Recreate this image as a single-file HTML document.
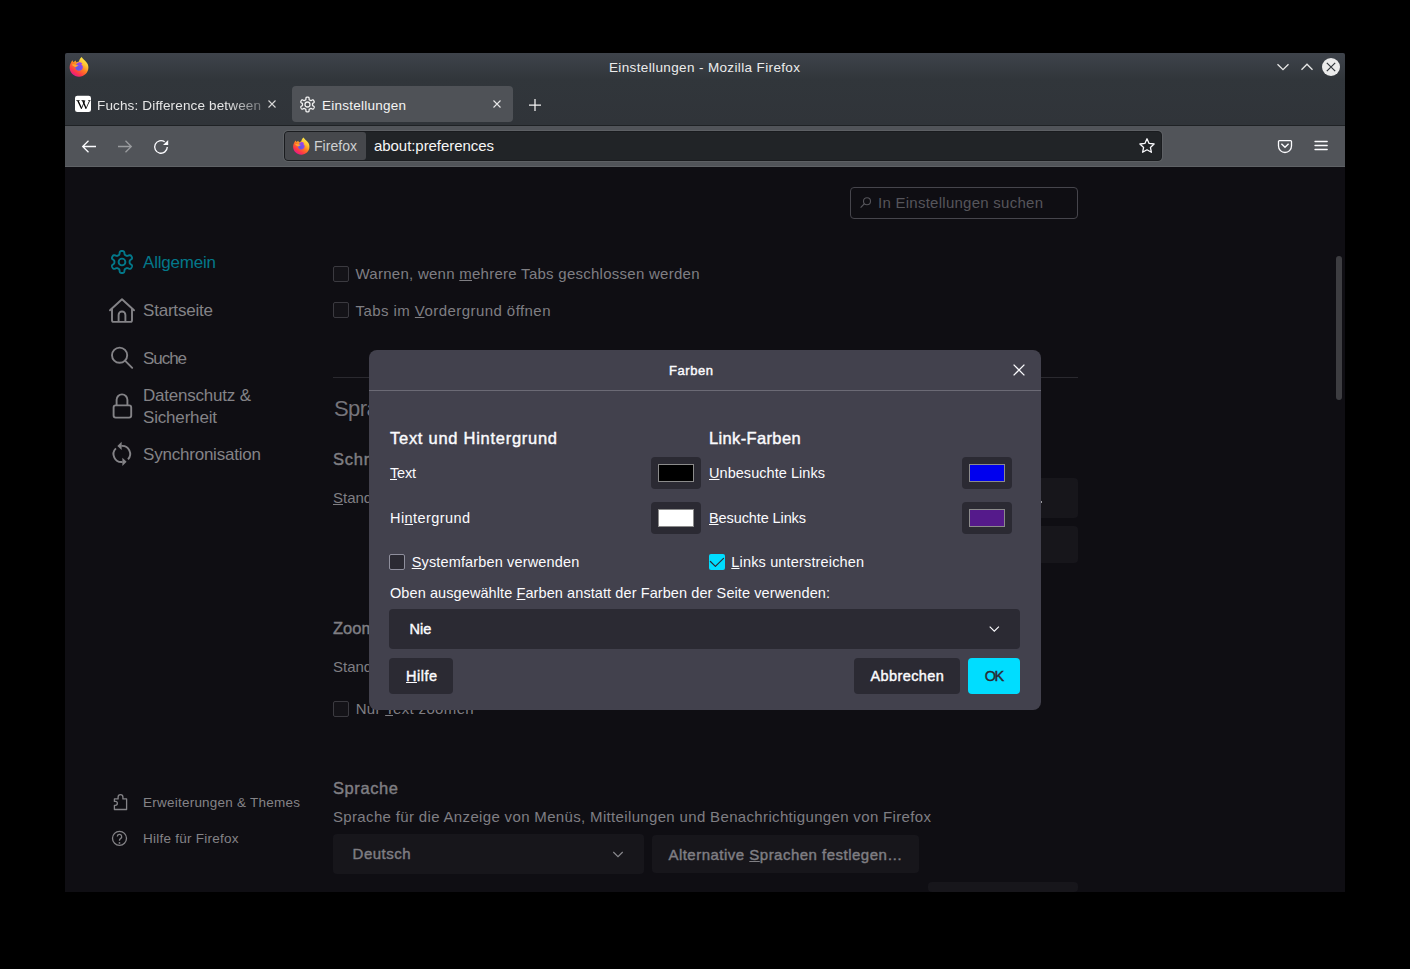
<!DOCTYPE html><html><head><meta charset="utf-8"><style>*{margin:0;padding:0}html,body{width:1410px;height:969px;overflow:hidden;background:#000}
body{position:relative;font-family:"Liberation Sans", sans-serif}u{text-decoration:underline;text-underline-offset:1px;text-decoration-thickness:1px}</style></head><body><div style="position:absolute;left:65px;top:53px;width:1280px;height:839px;background:#0f0e13;overflow:hidden;border-radius:2px 2px 0 0"></div><div style="position:absolute;left:65px;top:53px;width:1280px;height:72px;background:linear-gradient(#3e434b 0,#31363b 26px,#303439 72px);border-radius:2px 2px 0 0"></div><div style="position:absolute;left:65px;top:125px;width:1280px;height:1px;background:#1f2225"></div><div style="position:absolute;left:65px;top:126px;width:1280px;height:41px;background:#515459"></div><div style="position:absolute;left:65px;top:166px;width:1280px;height:1px;background:#5f6266"></div><div style="position:absolute;left:292px;top:86px;width:221px;height:36px;background:#4f5257;border-radius:4px"></div><div style="position:absolute;left:283px;top:130px;width:880px;height:32px;box-sizing:border-box;background:#5d6064;border-radius:5px"></div><div style="position:absolute;left:284px;top:131px;width:878px;height:30px;box-sizing:border-box;background:#212427;border:1px solid #1a1c1f;border-radius:4px"></div><div style="position:absolute;left:285px;top:132px;width:81px;height:28px;background:#46484c;border-radius:3px"></div><div style="position:absolute;left:65px;top:167px;width:1280px;height:725px;background:#0f0e13"></div><div style="position:absolute;left:850px;top:187px;width:228px;height:32px;box-sizing:border-box;border:1px solid #46454c;border-radius:4px;background:#0f0e13"></div><div style="position:absolute;left:333px;top:266px;width:16px;height:16px;box-sizing:border-box;border:1px solid #3b3a40;border-radius:2px;background:#141318"></div><div style="position:absolute;left:333px;top:302px;width:16px;height:16px;box-sizing:border-box;border:1px solid #3b3a40;border-radius:2px;background:#141318"></div><div style="position:absolute;left:333px;top:701px;width:16px;height:16px;box-sizing:border-box;border:1px solid #3b3a40;border-radius:2px;background:#141318"></div><div style="position:absolute;left:333px;top:377px;width:745px;height:1px;background:#2a292f"></div><div style="position:absolute;left:900px;top:478px;width:178px;height:40px;background:#17161b;border-radius:4px"></div><div style="position:absolute;left:900px;top:526px;width:178px;height:37px;background:#17161b;border-radius:4px"></div><div style="position:absolute;left:333px;top:834px;width:311px;height:40px;background:#17161b;border-radius:4px"></div><div style="position:absolute;left:652px;top:835px;width:267px;height:38px;background:#17161b;border-radius:4px"></div><div style="position:absolute;left:928px;top:882px;width:150px;height:10px;background:#17161b;border-radius:4px"></div><div style="position:absolute;left:1336px;top:256px;width:6px;height:144px;background:#3d3d41;border-radius:3px"></div><svg style="position:absolute;left:66px;top:54px" width="26.00" height="26.00" viewBox="0 0 26 26"><defs>
<linearGradient id="fg66" x1="0.85" y1="0.05" x2="0.25" y2="0.95"><stop offset="0" stop-color="#fff44f"/><stop offset="0.3" stop-color="#ffc232"/><stop offset="0.55" stop-color="#ff7a22"/><stop offset="0.8" stop-color="#ff3a45"/><stop offset="1" stop-color="#e8188a"/></linearGradient>
<radialGradient id="fp66" cx="0.35" cy="0.75" r="0.8"><stop offset="0" stop-color="#5b5be0"/><stop offset="1" stop-color="#a040f0"/></radialGradient></defs>
<path d="M15.6 3C17 5.2 19 6.6 20.6 8.4 22 10 22.4 11.8 22.4 13.6 22.4 18.8 18.2 22.7 13 22.7 7.8 22.7 3.6 18.7 3.6 13.6 3.6 10.8 4.8 8.4 6.3 6.3L7.5 8.2 9.4 6.6 10.6 8.6C11.4 8 12.2 7.6 13 7.5 13.2 5.8 14.2 4.2 15.6 3Z" fill="url(#fg66)"/>
<path d="M13 8.2C14.3 8.2 15.6 8.6 16.3 9.6L15.2 10.4C16.4 11.1 16.9 12.1 16.9 13 16.9 15.2 15.1 16.8 13 16.8 10.9 16.8 9.1 15.2 9.1 13.1 9.1 12.8 9.2 12.4 9.3 12.1 10 10.7 11 9.2 13 8.2Z" fill="url(#fp66)"/>
<path d="M6 10.6C7.6 10 9.6 10.4 10.6 10.9L12.6 11.4 9.4 13.3 8.2 12.4C7.2 12.1 6.4 11.6 6 10.6Z" fill="#ffa930"/>
</svg><svg style="position:absolute;left:72px;top:93px;" width="22" height="22" viewBox="0 0 22 22"><rect x="3" y="2.7" width="16" height="16.4" rx="2.4" fill="#fff"/><g fill="#000"><path d="M5.0 7.4H6.6L9.9 14.8 9.1 16Z"/><path d="M8.9 16L12.5 7.4H13.4L9.6 16Z"/><path d="M10.0 7.4H11.5L14.4 14.8 13.6 16Z"/><path d="M13.5 16L17.2 7.4H18.1L14.2 16Z"/><path d="M4.2 7.0H7.8V7.6H4.2Z"/><path d="M9.4 7.0H12.6V7.6H9.4Z"/><path d="M16.0 7.0H18.6V7.6H16.0Z"/></g></svg><svg style="position:absolute;left:267px;top:99px;" width="10" height="10" viewBox="0 0 10 10"><path d="M1.5 1.5L8.5 8.5M8.5 1.5L1.5 8.5" stroke="#d8d8d8" stroke-width="1.1"/></svg><svg style="position:absolute;left:492px;top:99px;" width="10" height="10" viewBox="0 0 10 10"><path d="M1.5 1.5L8.5 8.5M8.5 1.5L1.5 8.5" stroke="#e8e8e8" stroke-width="1.1"/></svg><svg style="position:absolute;left:299.1px;top:95.9px;" width="17" height="17" viewBox="0 0 17 17"><polygon points="13.50,8.50 13.50,8.67 13.49,8.85 13.48,9.02 13.49,9.20 13.53,9.39 13.69,9.60 14.13,9.90 14.75,10.29 15.15,10.66 15.26,10.96 15.24,11.22 15.16,11.46 15.06,11.70 14.94,11.93 14.82,12.15 14.69,12.37 14.55,12.58 14.40,12.78 14.22,12.97 14.01,13.13 13.70,13.18 13.18,13.02 12.53,12.67 12.05,12.44 11.78,12.41 11.60,12.47 11.45,12.55 11.30,12.65 11.15,12.74 11.00,12.83 10.85,12.92 10.69,13.00 10.54,13.08 10.39,13.17 10.25,13.30 10.14,13.55 10.10,14.07 10.07,14.81 9.95,15.34 9.75,15.59 9.51,15.69 9.26,15.75 9.01,15.78 8.75,15.79 8.50,15.80 8.25,15.79 7.99,15.78 7.74,15.75 7.49,15.69 7.25,15.59 7.05,15.34 6.93,14.81 6.90,14.07 6.86,13.55 6.75,13.30 6.61,13.17 6.46,13.08 6.31,13.00 6.15,12.92 6.00,12.83 5.85,12.74 5.70,12.65 5.55,12.55 5.40,12.47 5.22,12.41 4.95,12.44 4.47,12.67 3.82,13.02 3.30,13.18 2.99,13.13 2.78,12.97 2.60,12.78 2.45,12.58 2.31,12.37 2.18,12.15 2.06,11.93 1.94,11.70 1.84,11.46 1.76,11.22 1.74,10.96 1.85,10.66 2.25,10.29 2.87,9.90 3.31,9.60 3.47,9.39 3.51,9.20 3.52,9.02 3.51,8.85 3.50,8.67 3.50,8.50 3.50,8.33 3.51,8.15 3.52,7.98 3.51,7.80 3.47,7.61 3.31,7.40 2.87,7.10 2.25,6.71 1.85,6.34 1.74,6.04 1.76,5.78 1.84,5.54 1.94,5.30 2.06,5.07 2.18,4.85 2.31,4.63 2.45,4.42 2.60,4.22 2.78,4.03 2.99,3.87 3.30,3.82 3.82,3.98 4.47,4.33 4.95,4.56 5.22,4.59 5.40,4.53 5.55,4.45 5.70,4.35 5.85,4.26 6.00,4.17 6.15,4.08 6.31,4.00 6.46,3.92 6.61,3.83 6.75,3.70 6.86,3.45 6.90,2.93 6.93,2.19 7.05,1.66 7.25,1.41 7.49,1.31 7.74,1.25 7.99,1.22 8.25,1.21 8.50,1.20 8.75,1.21 9.01,1.22 9.26,1.25 9.51,1.31 9.75,1.41 9.95,1.66 10.07,2.19 10.10,2.93 10.14,3.45 10.25,3.70 10.39,3.83 10.54,3.92 10.69,4.00 10.85,4.08 11.00,4.17 11.15,4.26 11.30,4.35 11.45,4.45 11.60,4.53 11.78,4.59 12.05,4.56 12.53,4.33 13.18,3.98 13.70,3.82 14.01,3.87 14.22,4.03 14.40,4.22 14.55,4.42 14.69,4.63 14.82,4.85 14.94,5.07 15.06,5.30 15.16,5.54 15.24,5.78 15.26,6.04 15.15,6.34 14.75,6.71 14.13,7.10 13.69,7.40 13.53,7.61 13.49,7.80 13.48,7.98 13.49,8.15 13.50,8.33" fill="none" stroke="#f0f0f0" stroke-width="1.3" stroke-linejoin="round"/><circle cx="8.5" cy="8.5" r="2.50" fill="none" stroke="#f0f0f0" stroke-width="1.3"/></svg><svg style="position:absolute;left:527.5px;top:98px;" width="14" height="14" viewBox="0 0 14 14"><path d="M7 1V13M1 7H13" stroke="#f4f4f4" stroke-width="1.25"/></svg><svg style="position:absolute;left:81px;top:139px;" width="16" height="16" viewBox="0 0 16 16"><path d="M15 7.5H2.2M7.5 1.7L1.7 7.5l5.8 5.8" fill="none" stroke="#fbfbfe" stroke-width="1.3"/></svg><svg style="position:absolute;left:117px;top:139px;" width="16" height="16" viewBox="0 0 16 16"><path d="M1 7.5h12.8M8.5 1.7l5.8 5.8-5.8 5.8" fill="none" stroke="#9a9c9f" stroke-width="1.3"/></svg><svg style="position:absolute;left:148px;top:134px;" width="26" height="26" viewBox="0 0 26 26"><path d="M19.3 13.1A6.3 6.3 0 1 1 16.7 7.8" fill="none" stroke="#fbfbfe" stroke-width="1.35"/><path d="M20.2 5.9V11H15Z" fill="#fbfbfe"/></svg><svg style="position:absolute;left:289.9px;top:135.2px" width="22.54" height="22.54" viewBox="0 0 26 26"><defs>
<linearGradient id="fg289" x1="0.85" y1="0.05" x2="0.25" y2="0.95"><stop offset="0" stop-color="#fff44f"/><stop offset="0.3" stop-color="#ffc232"/><stop offset="0.55" stop-color="#ff7a22"/><stop offset="0.8" stop-color="#ff3a45"/><stop offset="1" stop-color="#e8188a"/></linearGradient>
<radialGradient id="fp289" cx="0.35" cy="0.75" r="0.8"><stop offset="0" stop-color="#5b5be0"/><stop offset="1" stop-color="#a040f0"/></radialGradient></defs>
<path d="M15.6 3C17 5.2 19 6.6 20.6 8.4 22 10 22.4 11.8 22.4 13.6 22.4 18.8 18.2 22.7 13 22.7 7.8 22.7 3.6 18.7 3.6 13.6 3.6 10.8 4.8 8.4 6.3 6.3L7.5 8.2 9.4 6.6 10.6 8.6C11.4 8 12.2 7.6 13 7.5 13.2 5.8 14.2 4.2 15.6 3Z" fill="url(#fg289)"/>
<path d="M13 8.2C14.3 8.2 15.6 8.6 16.3 9.6L15.2 10.4C16.4 11.1 16.9 12.1 16.9 13 16.9 15.2 15.1 16.8 13 16.8 10.9 16.8 9.1 15.2 9.1 13.1 9.1 12.8 9.2 12.4 9.3 12.1 10 10.7 11 9.2 13 8.2Z" fill="url(#fp289)"/>
<path d="M6 10.6C7.6 10 9.6 10.4 10.6 10.9L12.6 11.4 9.4 13.3 8.2 12.4C7.2 12.1 6.4 11.6 6 10.6Z" fill="#ffa930"/>
</svg><svg style="position:absolute;left:1138px;top:137px;" width="18" height="18" viewBox="0 0 18 18"><path d="M9 1.8l2.1 4.6 5 .6-3.7 3.4 1 4.9L9 12.8l-4.4 2.5 1-4.9L1.9 7l5-.6z" fill="none" stroke="#fbfbfe" stroke-width="1.3" stroke-linejoin="round"/></svg><svg style="position:absolute;left:1277px;top:139px;" width="16" height="16" viewBox="0 0 16 16"><path d="M2.4 1.6h11.2a.9.9 0 0 1 .9.9V7a6.5 6.5 0 0 1-13 0V2.5a.9.9 0 0 1 .9-.9z" fill="none" stroke="#fbfbfe" stroke-width="1.3"/><path d="M4.4 4.7l3.6 3.6 3.6-3.6" fill="none" stroke="#fbfbfe" stroke-width="1.4"/></svg><svg style="position:absolute;left:1314px;top:140px;" width="14" height="12" viewBox="0 0 14 12"><path d="M1 1.5H13.2M1 5.5H13.2M1 9.5H13.2" stroke="#fbfbfe" stroke-width="1.3" stroke-linecap="round"/></svg><svg style="position:absolute;left:1276px;top:62px;" width="14" height="10" viewBox="0 0 14 10"><path d="M1.5 2.2l5.5 5.5 5.5-5.5" fill="none" stroke="#e8e8e8" stroke-width="1.3"/></svg><svg style="position:absolute;left:1300px;top:62px;" width="14" height="10" viewBox="0 0 14 10"><path d="M1.5 7.7l5.5-5.5 5.5 5.5" fill="none" stroke="#e8e8e8" stroke-width="1.3"/></svg><svg style="position:absolute;left:1322px;top:58px;" width="18" height="18" viewBox="0 0 18 18"><circle cx="9" cy="9" r="9" fill="#ebebeb"/><path d="M4.8 4.8l8.4 8.4M13.2 4.8l-8.4 8.4" stroke="#31363b" stroke-width="1.2"/></svg><svg style="position:absolute;left:859px;top:196px;" width="13" height="13" viewBox="0 0 13 13"><circle cx="8" cy="5.2" r="3.5" fill="none" stroke="#56555b" stroke-width="1.1"/><path d="M5.5 7.7L1.6 11.6" stroke="#56555b" stroke-width="1.2"/></svg><svg style="position:absolute;left:106px;top:246px;" width="32" height="32" viewBox="0 0 32 32"><polygon points="23.60,16.00 23.60,16.27 23.60,16.53 23.61,16.80 23.66,17.08 23.79,17.37 24.09,17.72 24.64,18.15 25.32,18.67 25.82,19.19 26.05,19.66 26.08,20.07 26.00,20.45 25.87,20.81 25.71,21.16 25.53,21.50 25.32,21.83 25.10,22.14 24.86,22.43 24.56,22.69 24.19,22.87 23.68,22.91 22.97,22.73 22.19,22.41 21.53,22.15 21.08,22.06 20.76,22.09 20.50,22.19 20.26,22.32 20.03,22.45 19.80,22.58 19.57,22.71 19.34,22.85 19.11,22.99 18.90,23.17 18.70,23.43 18.56,23.86 18.45,24.56 18.35,25.41 18.15,26.10 17.86,26.53 17.51,26.76 17.14,26.89 16.77,26.95 16.38,26.99 16.00,27.00 15.62,26.99 15.23,26.95 14.86,26.89 14.49,26.76 14.14,26.53 13.85,26.10 13.65,25.41 13.55,24.56 13.44,23.86 13.30,23.43 13.10,23.17 12.89,22.99 12.66,22.85 12.43,22.71 12.20,22.58 11.97,22.45 11.74,22.32 11.50,22.19 11.24,22.09 10.92,22.06 10.47,22.15 9.81,22.41 9.03,22.73 8.32,22.91 7.81,22.87 7.44,22.69 7.14,22.43 6.90,22.14 6.68,21.83 6.47,21.50 6.29,21.16 6.13,20.81 6.00,20.45 5.92,20.07 5.95,19.66 6.18,19.19 6.68,18.67 7.36,18.15 7.91,17.72 8.21,17.37 8.34,17.08 8.39,16.80 8.40,16.53 8.40,16.27 8.40,16.00 8.40,15.73 8.40,15.47 8.39,15.20 8.34,14.92 8.21,14.63 7.91,14.28 7.36,13.85 6.68,13.33 6.18,12.81 5.95,12.34 5.92,11.93 6.00,11.55 6.13,11.19 6.29,10.84 6.47,10.50 6.68,10.17 6.90,9.86 7.14,9.57 7.44,9.31 7.81,9.13 8.32,9.09 9.03,9.27 9.81,9.59 10.47,9.85 10.92,9.94 11.24,9.91 11.50,9.81 11.74,9.68 11.97,9.55 12.20,9.42 12.43,9.29 12.66,9.15 12.89,9.01 13.10,8.83 13.30,8.57 13.44,8.14 13.55,7.44 13.65,6.59 13.85,5.90 14.14,5.47 14.49,5.24 14.86,5.11 15.23,5.05 15.62,5.01 16.00,5.00 16.38,5.01 16.77,5.05 17.14,5.11 17.51,5.24 17.86,5.47 18.15,5.90 18.35,6.59 18.45,7.44 18.56,8.14 18.70,8.57 18.90,8.83 19.11,9.01 19.34,9.15 19.57,9.29 19.80,9.42 20.03,9.55 20.26,9.68 20.50,9.81 20.76,9.91 21.08,9.94 21.53,9.85 22.19,9.59 22.97,9.27 23.68,9.09 24.19,9.13 24.56,9.31 24.86,9.57 25.10,9.86 25.32,10.17 25.53,10.50 25.71,10.84 25.87,11.19 26.00,11.55 26.08,11.93 26.05,12.34 25.82,12.81 25.32,13.33 24.64,13.85 24.09,14.28 23.79,14.63 23.66,14.92 23.61,15.20 23.60,15.47 23.60,15.73" fill="none" stroke="#03788a" stroke-width="1.9" stroke-linejoin="round"/><circle cx="16.0" cy="16.0" r="3.40" fill="none" stroke="#03788a" stroke-width="1.9"/></svg><svg style="position:absolute;left:106px;top:294px;" width="32" height="32" viewBox="0 0 32 32"><path d="M4 16.3L16 5.2 28 16.3" fill="none" stroke="#848387" stroke-width="1.9" stroke-linejoin="round" stroke-linecap="round"/><path d="M6 14.5V26.3a1.6 1.6 0 0 0 1.6 1.6H24.4a1.6 1.6 0 0 0 1.6-1.6V14.5M12.6 27.9V20.9a3.4 3.4 0 0 1 6.8 0V27.9" fill="none" stroke="#848387" stroke-width="1.9" stroke-linejoin="round"/></svg><svg style="position:absolute;left:106px;top:342px;" width="32" height="32" viewBox="0 0 32 32"><circle cx="13.6" cy="13.2" r="7.6" fill="none" stroke="#848387" stroke-width="1.9"/><path d="M19 18.6l7.2 7.2" stroke="#848387" stroke-width="1.9" stroke-linecap="round"/></svg><svg style="position:absolute;left:106px;top:390px;" width="32" height="32" viewBox="0 0 32 32"><path d="M10.6 15V9.8a5.4 5.4 0 0 1 10.8 0V15" fill="none" stroke="#848387" stroke-width="1.9"/><rect x="7.6" y="15.4" width="17.6" height="12.2" rx="2" fill="none" stroke="#848387" stroke-width="1.9"/></svg><svg style="position:absolute;left:106px;top:438px;" width="32" height="32" viewBox="0 0 32 32"><path d="M15.5 7.9A8 8 0 0 1 22 21.3M9.9 10.4A8 8 0 0 0 16.5 24" fill="none" stroke="#848387" stroke-width="1.9"/><path d="M15.6 3.8L11.4 7.9 15.6 12z" fill="#848387"/><path d="M16.4 19.7L20.6 23.8 16.4 27.9z" fill="#848387"/></svg><svg style="position:absolute;left:108px;top:788px;" width="24" height="30" viewBox="0 0 24 30"><path d="M6.4 10.9H10.1V9a2.4 2.4 0 0 1 4.8 0V10.9H18.6V21.5H6.4V17.3H7.4A1.95 1.95 0 0 0 7.4 13.4H6.4Z" fill="none" stroke="#848387" stroke-width="1.3" stroke-linejoin="round"/></svg><svg style="position:absolute;left:111px;top:830px;" width="17" height="17" viewBox="0 0 17 17"><circle cx="8.5" cy="8.3" r="7.0" fill="none" stroke="#848387" stroke-width="1.3"/><path d="M6.3 6.6a2.2 2.2 0 1 1 3.2 2c-.7.4-1 .8-1 1.6v.6" fill="none" stroke="#848387" stroke-width="1.3"/><circle cx="8.5" cy="12.9" r=".9" fill="#848387"/></svg><svg style="position:absolute;left:611px;top:849px;" width="13" height="10" viewBox="0 0 13 10"><path d="M2.3 3l4.7 4.7 4.7-4.7" fill="none" stroke="#8a898e" stroke-width="1.15"/></svg><div id="title" style="position:absolute;left:609px;top:61.00px;font-size:13.5px;font-weight:400;line-height:1;color:#ececec;white-space:pre;letter-spacing:0.364px;">Einstellungen - Mozilla Firefox<span style="display:inline-block;width:0;height:0"></span></div><div id="tab1" style="position:absolute;left:97px;top:99.00px;font-size:13.5px;font-weight:400;line-height:1;color:#e6e6e6;white-space:pre;letter-spacing:0.152px;width:170px;overflow:hidden;-webkit-mask-image:linear-gradient(90deg,#000 0,#000 130px,rgba(0,0,0,.35) 164px);">Fuchs: Difference between<span style="display:inline-block;width:0;height:0"></span></div><div id="tab2" style="position:absolute;left:322px;top:99.00px;font-size:13.5px;font-weight:400;line-height:1;color:#f4f4f4;white-space:pre;letter-spacing:0.245px;">Einstellungen<span style="display:inline-block;width:0;height:0"></span></div><div id="idbox" style="position:absolute;left:314px;top:139.00px;font-size:14px;font-weight:400;line-height:1;color:#cfd0d2;white-space:pre;letter-spacing:0.034px;">Firefox<span style="display:inline-block;width:0;height:0"></span></div><div id="url" style="position:absolute;left:374px;top:138.00px;font-size:15px;font-weight:400;line-height:1;color:#f6f6f6;white-space:pre;letter-spacing:-0.058px;">about:preferences<span style="display:inline-block;width:0;height:0"></span></div><div id="search" style="position:absolute;left:878px;top:195.00px;font-size:15px;font-weight:400;line-height:1;color:#56555b;white-space:pre;letter-spacing:0.260px;">In Einstellungen suchen<span style="display:inline-block;width:0;height:0"></span></div><div id="cat1" style="position:absolute;left:143px;top:254.00px;font-size:17px;font-weight:400;line-height:1;color:#03788a;white-space:pre;letter-spacing:-0.207px;">Allgemein<span style="display:inline-block;width:0;height:0"></span></div><div id="cat2" style="position:absolute;left:143px;top:302.00px;font-size:17px;font-weight:400;line-height:1;color:#848387;white-space:pre;letter-spacing:-0.201px;">Startseite<span style="display:inline-block;width:0;height:0"></span></div><div id="cat3" style="position:absolute;left:143px;top:350.00px;font-size:17px;font-weight:400;line-height:1;color:#848387;white-space:pre;letter-spacing:-1.051px;">Suche<span style="display:inline-block;width:0;height:0"></span></div><div id="cat4" style="position:absolute;left:143px;top:387.00px;font-size:17px;font-weight:400;line-height:1;color:#848387;white-space:pre;letter-spacing:-0.214px;">Datenschutz &amp;<span style="display:inline-block;width:0;height:0"></span></div><div id="cat4b" style="position:absolute;left:143px;top:409.00px;font-size:17px;font-weight:400;line-height:1;color:#848387;white-space:pre;letter-spacing:-0.179px;">Sicherheit<span style="display:inline-block;width:0;height:0"></span></div><div id="cat5" style="position:absolute;left:143px;top:446.00px;font-size:17px;font-weight:400;line-height:1;color:#848387;white-space:pre;letter-spacing:-0.212px;">Synchronisation<span style="display:inline-block;width:0;height:0"></span></div><div id="ext" style="position:absolute;left:143px;top:796.00px;font-size:13.5px;font-weight:400;line-height:1;color:#848387;white-space:pre;letter-spacing:0.234px;">Erweiterungen &amp; Themes<span style="display:inline-block;width:0;height:0"></span></div><div id="help" style="position:absolute;left:143px;top:832.00px;font-size:13.5px;font-weight:400;line-height:1;color:#848387;white-space:pre;letter-spacing:0.248px;">Hilfe für Firefox<span style="display:inline-block;width:0;height:0"></span></div><div id="warn" style="position:absolute;left:355.5px;top:266.00px;font-size:15px;font-weight:400;line-height:1;color:#7f7e83;white-space:pre;letter-spacing:0.263px;">Warnen, wenn <u>m</u>ehrere Tabs geschlossen werden<span style="display:inline-block;width:0;height:0"></span></div><div id="tabsfg" style="position:absolute;left:355.5px;top:303.00px;font-size:15px;font-weight:400;line-height:1;color:#7f7e83;white-space:pre;letter-spacing:0.439px;">Tabs im <u>V</u>ordergrund öffnen<span style="display:inline-block;width:0;height:0"></span></div><div id="h_lang" style="position:absolute;left:334px;top:398.00px;font-size:22px;font-weight:300;line-height:1;color:#75747a;white-space:pre;letter-spacing:0.000px;letter-spacing:-0.6px;">Sprache und Erscheinungsbild<span style="display:inline-block;width:0;height:0"></span></div><div id="h_fonts" style="position:absolute;left:333px;top:451.00px;font-size:16.5px;font-weight:400;line-height:1;color:#7f7e83;white-space:pre;letter-spacing:0.000px;-webkit-text-stroke:0.42px #7f7e83;letter-spacing:0.8px;">Schriftarten<span style="display:inline-block;width:0;height:0"></span></div><div id="stdfont" style="position:absolute;left:333px;top:490.00px;font-size:15px;font-weight:400;line-height:1;color:#7f7e83;white-space:pre;letter-spacing:0.000px;"><u>S</u>tandard-Schriftart<span style="display:inline-block;width:0;height:0"></span></div><div id="h_zoom" style="position:absolute;left:333px;top:620.00px;font-size:16.5px;font-weight:400;line-height:1;color:#7f7e83;white-space:pre;letter-spacing:0.000px;-webkit-text-stroke:0.42px #7f7e83;">Zoom<span style="display:inline-block;width:0;height:0"></span></div><div id="stdzoom" style="position:absolute;left:333px;top:659.00px;font-size:15px;font-weight:400;line-height:1;color:#7f7e83;white-space:pre;letter-spacing:0.000px;">Standard-Zoom<span style="display:inline-block;width:0;height:0"></span></div><div id="onlytext" style="position:absolute;left:355.7px;top:701.00px;font-size:15px;font-weight:400;line-height:1;color:#7f7e83;white-space:pre;letter-spacing:0.348px;">Nur <u>T</u>ext zoomen<span style="display:inline-block;width:0;height:0"></span></div><div id="h_sprache" style="position:absolute;left:333px;top:780.00px;font-size:16.5px;font-weight:400;line-height:1;color:#7f7e83;white-space:pre;letter-spacing:0.589px;-webkit-text-stroke:0.42px #7f7e83;">Sprache<span style="display:inline-block;width:0;height:0"></span></div><div id="langdesc" style="position:absolute;left:333px;top:809.00px;font-size:15px;font-weight:400;line-height:1;color:#7f7e83;white-space:pre;letter-spacing:0.341px;">Sprache für die Anzeige von Menüs, Mitteilungen und Benachrichtigungen von Firefox<span style="display:inline-block;width:0;height:0"></span></div><div id="deutsch" style="position:absolute;left:352.6px;top:846.00px;font-size:15px;font-weight:400;line-height:1;color:#7f7e83;white-space:pre;letter-spacing:0.495px;-webkit-text-stroke:0.42px #7f7e83;">Deutsch<span style="display:inline-block;width:0;height:0"></span></div><div id="altlang" style="position:absolute;left:668.4px;top:847.00px;font-size:15px;font-weight:400;line-height:1;color:#7f7e83;white-space:pre;letter-spacing:0.489px;-webkit-text-stroke:0.42px #7f7e83;">Alternative <u>S</u>prachen festlegen…<span style="display:inline-block;width:0;height:0"></span></div><div style="position:absolute;left:369px;top:350px;width:672px;height:360px;background:#42414d;border-radius:8px"></div><div style="position:absolute;left:369px;top:390px;width:672px;height:1px;background:#6b6a75"></div><div style="position:absolute;left:651px;top:457px;width:50px;height:32px;background:#2b2a33;border-radius:4px"></div><div style="position:absolute;left:658px;top:464px;width:36px;height:18px;box-sizing:border-box;border:1px solid #8b8b8b;background:#000000"></div><div style="position:absolute;left:651px;top:502px;width:50px;height:32px;background:#2b2a33;border-radius:4px"></div><div style="position:absolute;left:658px;top:509px;width:36px;height:18px;box-sizing:border-box;border:1px solid #8b8b8b;background:#ffffff"></div><div style="position:absolute;left:962px;top:457px;width:50px;height:32px;background:#2b2a33;border-radius:4px"></div><div style="position:absolute;left:969px;top:464px;width:36px;height:18px;box-sizing:border-box;border:1px solid #8b8b8b;background:#0000ee"></div><div style="position:absolute;left:962px;top:502px;width:50px;height:32px;background:#2b2a33;border-radius:4px"></div><div style="position:absolute;left:969px;top:509px;width:36px;height:18px;box-sizing:border-box;border:1px solid #8b8b8b;background:#551a8b"></div><div style="position:absolute;left:389px;top:554px;width:16px;height:16px;box-sizing:border-box;border:1px solid #8f8f9d;border-radius:2px;background:#2b2a33"></div><div style="position:absolute;left:709px;top:554px;width:16px;height:16px;background:#00ddff;border-radius:2px"></div><svg style="position:absolute;left:709px;top:554px;" width="16" height="16" viewBox="0 0 16 16"><path d="M1.4 7.5l5 4.9 8.1-8" fill="none" stroke="#2b2a33" stroke-width="1.2" stroke-linecap="round" stroke-linejoin="round"/></svg><div style="position:absolute;left:389px;top:609px;width:631px;height:40px;background:#2b2a33;border-radius:4px"></div><svg style="position:absolute;left:988px;top:624px;" width="12" height="10" viewBox="0 0 12 10"><path d="M1.7 2.6l4.6 4.6 4.6-4.6" fill="none" stroke="#fbfbfe" stroke-width="1.15"/></svg><div style="position:absolute;left:389px;top:658px;width:64px;height:36px;background:#2b2a33;border-radius:4px"></div><div style="position:absolute;left:854px;top:658px;width:106px;height:36px;background:#2b2a33;border-radius:4px"></div><div style="position:absolute;left:968px;top:658px;width:52px;height:36px;background:#00ddff;border-radius:4px"></div><div style="position:absolute;left:1041px;top:501px;width:1px;height:2px;background:#9a9a9e"></div><svg style="position:absolute;left:1011px;top:362px;" width="16" height="16" viewBox="0 0 16 16"><path d="M2.6 2.6L13.4 13.4M13.4 2.6L2.6 13.4" stroke="#fbfbfe" stroke-width="1.3"/></svg><div id="d_title" style="position:absolute;left:669px;top:364.00px;font-size:13px;font-weight:400;line-height:1;color:#fbfbfe;white-space:pre;letter-spacing:0.559px;-webkit-text-stroke:0.42px #fbfbfe;">Farben<span style="display:inline-block;width:0;height:0"></span></div><div id="d_h1" style="position:absolute;left:390px;top:430.00px;font-size:16.5px;font-weight:400;line-height:1;color:#fbfbfe;white-space:pre;letter-spacing:0.727px;-webkit-text-stroke:0.42px #fbfbfe;">Text und Hintergrund<span style="display:inline-block;width:0;height:0"></span></div><div id="d_h2" style="position:absolute;left:709px;top:430.00px;font-size:16.5px;font-weight:400;line-height:1;color:#fbfbfe;white-space:pre;letter-spacing:0.355px;-webkit-text-stroke:0.42px #fbfbfe;">Link-Farben<span style="display:inline-block;width:0;height:0"></span></div><div id="d_text" style="position:absolute;left:390px;top:466.00px;font-size:14.5px;font-weight:400;line-height:1;color:#fbfbfe;white-space:pre;letter-spacing:-0.198px;"><u>T</u>ext<span style="display:inline-block;width:0;height:0"></span></div><div id="d_bg" style="position:absolute;left:390px;top:511.00px;font-size:14.5px;font-weight:400;line-height:1;color:#fbfbfe;white-space:pre;letter-spacing:0.420px;">Hi<u>n</u>tergrund<span style="display:inline-block;width:0;height:0"></span></div><div id="d_unv" style="position:absolute;left:709px;top:466.00px;font-size:14.5px;font-weight:400;line-height:1;color:#fbfbfe;white-space:pre;letter-spacing:0.048px;"><u>U</u>nbesuchte Links<span style="display:inline-block;width:0;height:0"></span></div><div id="d_vis" style="position:absolute;left:709px;top:511.00px;font-size:14.5px;font-weight:400;line-height:1;color:#fbfbfe;white-space:pre;letter-spacing:-0.103px;"><u>B</u>esuchte Links<span style="display:inline-block;width:0;height:0"></span></div><div id="d_sys" style="position:absolute;left:411.7px;top:555.00px;font-size:14.5px;font-weight:400;line-height:1;color:#fbfbfe;white-space:pre;letter-spacing:0.147px;"><u>S</u>ystemfarben verwenden<span style="display:inline-block;width:0;height:0"></span></div><div id="d_ul" style="position:absolute;left:731.3px;top:555.00px;font-size:14.5px;font-weight:400;line-height:1;color:#fbfbfe;white-space:pre;letter-spacing:0.159px;"><u>L</u>inks unterstreichen<span style="display:inline-block;width:0;height:0"></span></div><div id="d_over" style="position:absolute;left:390px;top:586.00px;font-size:14.5px;font-weight:400;line-height:1;color:#fbfbfe;white-space:pre;letter-spacing:0.089px;">Oben ausgewählte <u>F</u>arben anstatt der Farben der Seite verwenden:<span style="display:inline-block;width:0;height:0"></span></div><div id="d_nie" style="position:absolute;left:409.4px;top:622.00px;font-size:14.5px;font-weight:400;line-height:1;color:#fbfbfe;white-space:pre;letter-spacing:0.117px;-webkit-text-stroke:0.42px #fbfbfe;">Nie<span style="display:inline-block;width:0;height:0"></span></div><div id="d_hilfe" style="position:absolute;left:406px;top:669.00px;font-size:14.5px;font-weight:400;line-height:1;color:#fbfbfe;white-space:pre;letter-spacing:0.492px;-webkit-text-stroke:0.42px #fbfbfe;"><u>H</u>ilfe<span style="display:inline-block;width:0;height:0"></span></div><div id="d_cancel" style="position:absolute;left:870.5px;top:669.00px;font-size:14.5px;font-weight:400;line-height:1;color:#fbfbfe;white-space:pre;letter-spacing:0.395px;-webkit-text-stroke:0.42px #fbfbfe;">Abbrechen<span style="display:inline-block;width:0;height:0"></span></div><div id="d_ok" style="position:absolute;left:984.7px;top:669.00px;font-size:14.5px;font-weight:400;line-height:1;color:#2b2a33;white-space:pre;letter-spacing:-1.553px;-webkit-text-stroke:0.42px #2b2a33;">OK<span style="display:inline-block;width:0;height:0"></span></div></body></html>
